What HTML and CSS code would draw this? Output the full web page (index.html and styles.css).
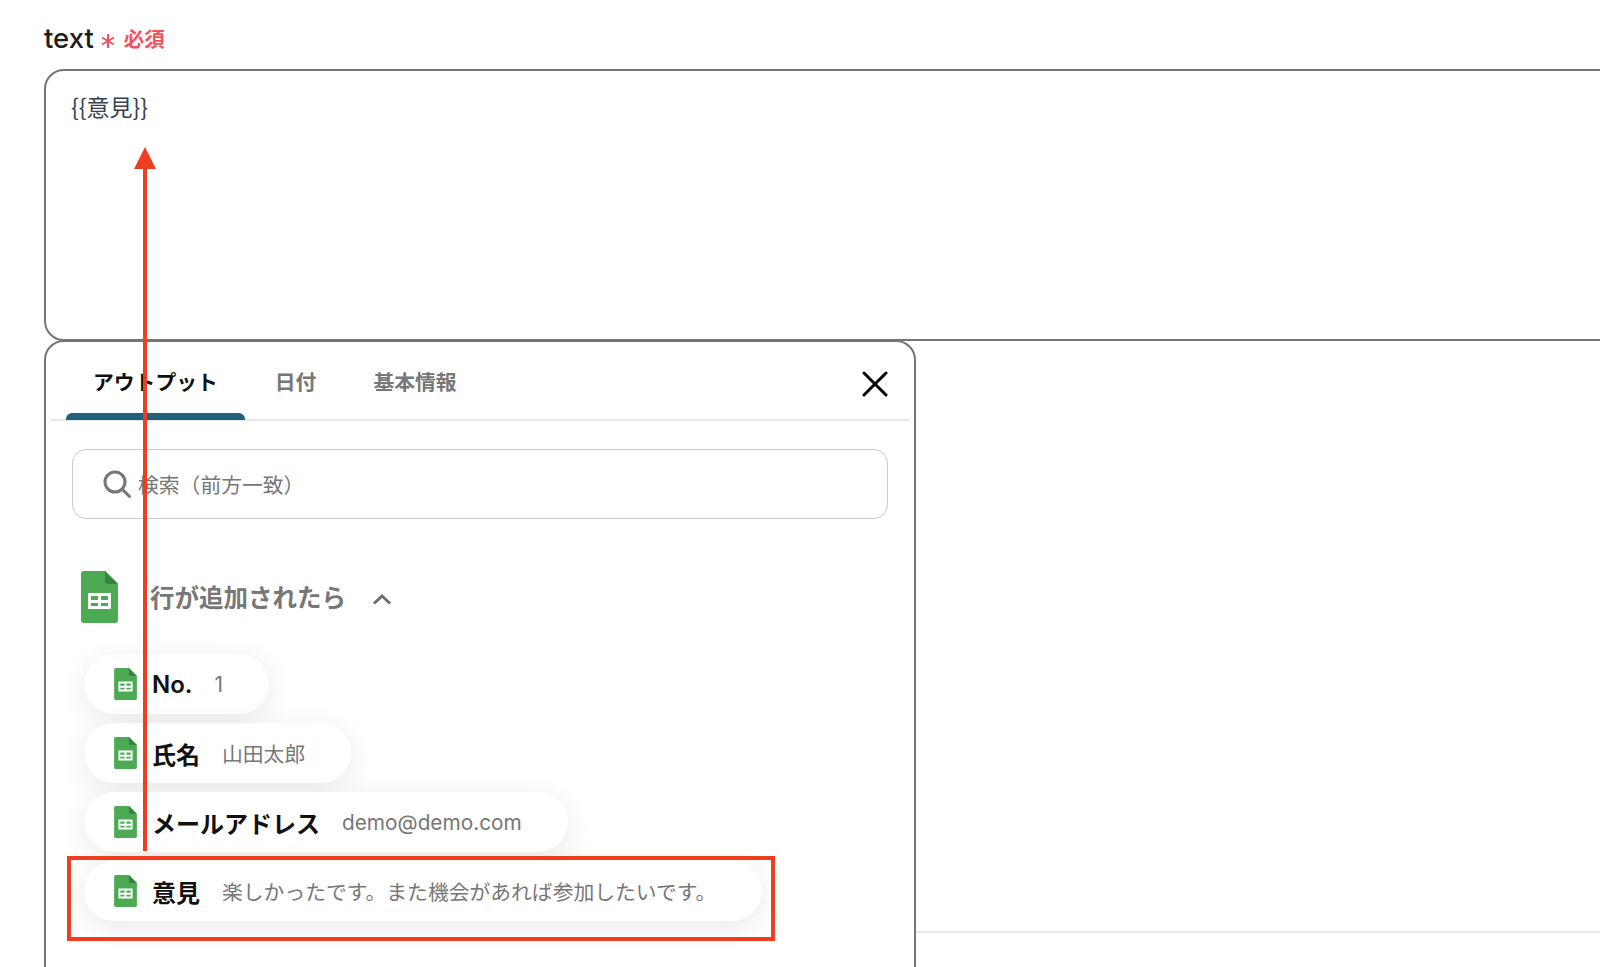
FILE: index.html
```html
<!DOCTYPE html>
<html lang="ja">
<head>
<meta charset="utf-8">
<title>text</title>
<link rel="stylesheet" href="styles.css">
</head>
<body>
<svg class="defs" width="0" height="0" aria-hidden="true">
  <symbol id="sheet" viewBox="0 0 37 52">
    <path fill="#4caa55" d="M3 0H24L37 13V49a3 3 0 0 1-3 3H3a3 3 0 0 1-3-3V3a3 3 0 0 1 3-3Z"/>
    <path fill="#35843f" d="M24 0 37 13H27a3 3 0 0 1-3-3Z"/>
    <path fill="#fff" fill-rule="evenodd" d="M7 22H30V38H7ZM10 25V29H17V25ZM20 25V29H27V25ZM10 32V35H17V32ZM20 32V35H27V32Z"/>
  </symbol>
</svg>
<main class="page">
  <div class="label-row">
    <span class="label">text</span>
    <svg class="star" viewBox="0 0 16 16"><path d="M8 1V15M2 4.5 14 11.5M14 4.5 2 11.5"/></svg>
    <span class="required">必須</span>
  </div>
  <div class="textarea">{{意見}}</div>
  <div class="divider"></div>

  <section class="panel">
    <div class="tabs">
      <span class="tab active">アウトプット</span>
      <span class="tab date">日付</span>
      <span class="tab info">基本情報</span>
      <svg class="close" viewBox="0 0 26 26"><path d="M2 2 24 24M24 2 2 24"/></svg>
    </div>
    <div class="search">
      <svg class="search-icon" viewBox="0 0 28 28"><circle cx="12" cy="12" r="10"/><path d="M19.5 19.5 26.5 26.5"/></svg>
      <span>検索（前方一致）</span>
    </div>
    <div class="group">
      <svg class="group-icon"><use href="#sheet"/></svg>
      <span class="group-title">行が追加されたら</span>
      <svg class="chevron" viewBox="0 0 20 12"><path d="M2 10.5 10 3l8 7.5"/></svg>
    </div>
    <ul class="pills">
      <li class="pill">
        <svg class="pill-icon"><use href="#sheet"/></svg>
        <b class="name">No.</b><span class="value">1</span>
      </li>
      <li class="pill">
        <svg class="pill-icon"><use href="#sheet"/></svg>
        <b class="name">氏名</b><span class="value">山田太郎</span>
      </li>
      <li class="pill">
        <svg class="pill-icon"><use href="#sheet"/></svg>
        <b class="name">メールアドレス</b><span class="value">demo@demo.com</span>
      </li>
      <li class="pill">
        <svg class="pill-icon"><use href="#sheet"/></svg>
        <b class="name">意見</b><span class="value">楽しかったです。また機会があれば参加したいです。</span>
      </li>
    </ul>
  </section>

  <div class="highlight"></div>
  <svg class="arrow" viewBox="0 0 22 704"><path class="arrow-head" d="M11 0 22 22H0Z"/><path class="arrow-line" d="M11 20V704"/></svg>
</main>
</body>
</html>
```

FILE: styles.css
```css
* { box-sizing: border-box; }
html, body { margin: 0; height: 100%; background: #fff; }
body {
  overflow: hidden;
  font-family: "Noto Sans CJK JP", "Noto Sans", sans-serif;
  color: #111;
}
.defs { position: absolute; }
.page {
  position: relative;
  height: 967px;
  padding: 20px 0 0 44px;
  overflow: hidden;
}
.label-row {
  display: flex;
  align-items: center;
  height: 36px;
  margin-bottom: 13px;
}
.label {
  font-family: Inter, "Noto Sans", sans-serif;
  font-size: 27.5px;
  font-weight: 500;
  color: #1c1c1c;
}
.star {
  width: 16px;
  height: 16px;
  margin: 6px 0 0 6px;
  fill: none;
  stroke: #f0525f;
  stroke-width: 2;
}
.required {
  margin-left: 8px;
  font-size: 20.5px;
  font-weight: 700;
  color: #f0525f;
}
.textarea {
  width: 1600px;
  height: 272px;
  padding: 17px 25px;
  border: 2px solid #757575;
  border-radius: 20px;
  font-size: 23px;
  line-height: 36px;
  color: #36424f;
}
.divider {
  height: 2px;
  margin: 590px 0 0 870px;
  background: #e6e6e6;
}
.panel {
  position: absolute;
  top: 340px;
  left: 44px;
  width: 872px;
  height: 700px;
  padding: 0 5px;
  background: #fff;
  border: 2px solid #757575;
  border-radius: 20px;
}
.tabs {
  position: relative;
  display: flex;
  height: 79px;
  padding: 21px 0 0 42px;
  border-bottom: 2px solid #e6e6e6;
  font-size: 20.8px;
  font-weight: 700;
  line-height: 36px;
  color: #777;
}
.tab { display: block; }
.tab.active { position: relative; color: #111; }
.tab.active::after {
  content: "";
  position: absolute;
  left: -27px;
  right: -27px;
  top: 50px;
  height: 7px;
  border-radius: 6px 6px 0 0;
  background: #22607e;
}
.tab.date { margin-left: 57px; }
.tab.info { margin-left: 57px; }
.close {
  position: absolute;
  top: 29px;
  right: 21px;
  width: 26px;
  height: 26px;
  fill: none;
  stroke: #000;
  stroke-width: 3;
  stroke-linecap: round;
}
.search {
  display: flex;
  align-items: center;
  height: 70px;
  margin: 28px 21px 0 21px;
  padding: 0 0 0 30px;
  border: 1.5px solid #cacaca;
  border-radius: 14px;
  font-size: 20.8px;
  color: #777;
}
.search-icon {
  width: 28px;
  height: 28px;
  margin-right: 7px;
  fill: none;
  stroke: #777;
  stroke-width: 3;
  stroke-linecap: round;
}
.group {
  display: flex;
  align-items: center;
  height: 52px;
  margin: 52px 0 0 30px;
}
.group-icon { width: 37px; height: 52px; }
.group-title {
  margin: -2px 0 0 32px;
  font-size: 24.5px;
  font-weight: 700;
  color: #777;
}
.chevron {
  width: 20px;
  height: 12px;
  margin: 4px 0 0 26px;
  fill: none;
  stroke: #6e6e6e;
  stroke-width: 3;
}
.pills {
  display: flex;
  flex-direction: column;
  align-items: flex-start;
  gap: 9px;
  margin: 31px 0 0 33px;
  padding: 0;
  list-style: none;
}
.pill {
  display: flex;
  align-items: center;
  height: 60px;
  padding: 0 46px 0 30px;
  background: #fff;
  border-radius: 30px;
  box-shadow: 0 6px 28px rgba(0, 0, 0, 0.09);
}
.pill-icon { width: 23px; height: 32px; flex: none; }
.name {
  margin-left: 15px;
  font-family: Inter, "Noto Sans CJK JP", sans-serif;
  font-size: 24px;
  font-weight: 600;
  color: #111;
}
.value {
  margin-left: 22px;
  font-family: Inter, "Noto Sans CJK JP", sans-serif;
  font-size: 20.8px;
  color: #777;
}
.highlight {
  position: absolute;
  top: 856px;
  left: 67px;
  width: 708px;
  height: 85px;
  border: 4px solid #ee3d20;
}
.arrow {
  position: absolute;
  top: 147px;
  left: 134px;
  width: 22px;
  height: 704px;
}
.arrow-head { fill: #ee3d20; }
.arrow-line { stroke: #ee3d20; stroke-width: 4; fill: none; }
```
